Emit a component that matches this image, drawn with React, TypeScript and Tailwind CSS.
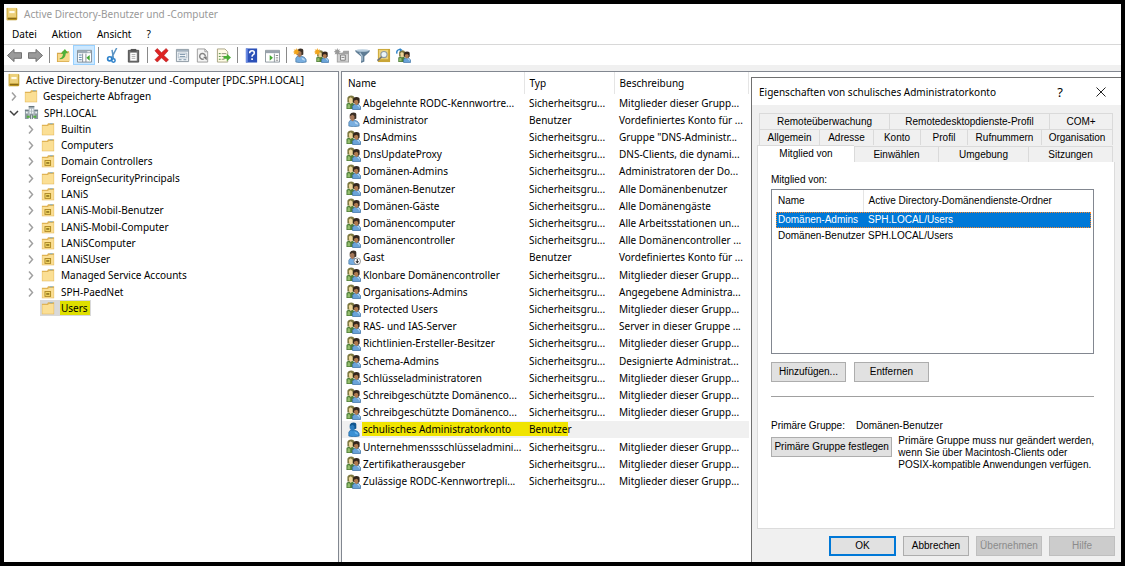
import { ReactNode, useState } from "react"
import clsx from "clsx"

type IconProps = { className?: string }

function Svg({ className = "size-[15px]", children }: IconProps & { children: ReactNode }) {
  return (
    <svg viewBox="0 0 16 16" aria-hidden="true" className={clsx("shrink-0", className)}>
      {children}
    </svg>
  )
}

function BookIcon({ className }: IconProps) {
  return (
    <Svg className={className}>
      <path d="M2 1h11l1 1v12l-1 1H2z" fill="#b8921f" />
      <path d="M3 1h10v11H3z" fill="#ecd07a" />
      <path d="M2 1h1.500v14H2z" fill="#d9b850" />
      <path d="M5 4.500h6V7H5z" fill="#fffbe8" />
      <path d="M3 12.500h10v1H3z" fill="#7d6015" />
    </Svg>
  )
}

function FolderIcon({ unit = false }: { unit?: boolean }) {
  return (
    <Svg className="size-[14px]">
      <path d="M1 3h6l1-1.500h7V15H1z" fill="#e0b354" />
      <path d="M1.500 4.500H8L9 3.500h5.500v11h-13z" fill="#fbdf94" />
      <path d="M10 1.500h3.500v1H10z" fill="#7db4dd" />
      {unit && (
        <>
          <path d="M4 7h7.500v6.500H4z" fill="#a8821c" />
          <path d="M5 8h5.500v4.500H5z" fill="#f3d766" />
          <path d="M6 9.500h3.500V11H6z" fill="#75590d" />
        </>
      )}
    </Svg>
  )
}

function DomainIcon() {
  return (
    <Svg>
      <path d="M5 1h6v13H5z" fill="#aeb9bf" />
      <path d="M1 5h4v10H1zM11 5h4v10h-4z" fill="#8b999f" />
      <path d="M5 1h6v1.500H5zM1 5h4v1H1zM11 5h4v1h-4z" fill="#66757c" />
      <path
        d="M6 4h1.500v2H6zM8.500 4H10v2H8.500zM6 7h1.500v2H6zM8.500 7H10v2H8.500zM2 7h2v2H2zM12 7h2v2h-2z"
        fill="#eff4f6"
      />
      <path d="M3 11.500h3v2H3zM10 11.500h3v2h-3z" fill="#54b23e" />
      <path d="M6.500 10h3v5h-3z" fill="#707d83" />
      <path d="M7.500 11h1v4h-1z" fill="#d8e0e3" />
    </Svg>
  )
}

function GroupShape() {
  return (
    <>
      <path d="M.5 15V9.500Q2 8 5 8t4 2v5z" fill="#4f7e39" />
      <path d="M1.500 13l.5-3.500 2.500 1V14h-3z" fill="#93bd6d" />
      <path d="M1.500 8V3q1-2.500 4-2.500T9 3v5z" fill="#7d7840" />
      <path d="M3 4l2-1.500L7 4v4L5 9.500 3.500 8z" fill="#edd59a" />
      <path d="M7 15.500V12q1-2.500 4-2.500t4.500 3v3z" fill="#6aa3d8" stroke="#3c71a5" strokeWidth=".8" />
      <path d="M11 10l3 1 1 3-2-2z" fill="#b9dcf5" />
      <path d="M7.500 8V5q0-3 3.700-3T14.500 5v3l-2 2z" fill="#33261c" />
      <path d="M8.500 6l3-1 1.500 1.500V9l-2 2L9 9z" fill="#b27c50" />
    </>
  )
}

function UserShape({ selected = false }: { selected?: boolean }) {
  return (
    <>
      <path
        d="M3 15V11q1-2.500 3-2.500h2q5 .5 6 4V15q-6 1.500-11 0z"
        fill={selected ? "#3c91d4" : "#78aee0"}
        stroke={selected ? "#155c98" : "#41739f"}
        strokeWidth=".7"
      />
      <path d="M9 10l3 1.500 1 2-3-1z" fill={selected ? "#67b5ed" : "#bddaf3"} />
      <path d="M4 7V3q1-2.500 4-2.500T11 3v4l-2 1z" fill={selected ? "#11568f" : "#3c3026"} />
      <path d="M4 4.500L7 3l2 1.500v3L7.500 10 5 8.500z" fill={selected ? "#2d7dbd" : "#a5785a"} />
    </>
  )
}

function GroupIcon() {
  return (
    <Svg>
      <GroupShape />
    </Svg>
  )
}

function UserIcon({ selected, disabled }: { selected?: boolean; disabled?: boolean }) {
  return (
    <Svg>
      <UserShape selected={selected} />
      {disabled && (
        <>
          <circle cx="12" cy="12" r="3.500" fill="#fff" stroke="#777" strokeWidth=".8" />
          <path d="M11.500 9.500h1V12H14l-2 2.500-2-2.500h1.500z" fill="#222" />
        </>
      )}
    </Svg>
  )
}

const sparkle = (
  <path
    d="M3.500 0l.8 2.200L6.500 1.200 5.400 3.300l2.100.9-2.200.8.900 2-2-1L3.500 8l-.8-2-2 1 .9-2L0 4.200l1.800-.9L.7 1.200l2 1z"
    fill="#f2a51d"
  />
)

const toolbarIcons: Record<string, ReactNode> = {
  Zurück: (
    <path d="M.5 8l7-6.500V5h8v6h-8v3.500z" fill="#9a9a9a" stroke="#6b6b6b" strokeWidth="1" />
  ),
  Vorwärts: (
    <path d="M15.500 8l-7-6.500V5h-8v6h8v3.500z" fill="#9a9a9a" stroke="#6b6b6b" strokeWidth="1" />
  ),
  "Eine Ebene höher": (
    <>
      <path d="M1 5h5l1-1.500h7V15H1z" fill="#d7a94b" />
      <path d="M2 6.500h6l1-1.500h5.500v9H2z" fill="#f8d98c" />
      <path d="M4 11q3-.5 3.500-5H5L9.500 1 13 5.500h-2.500Q10 12 4 12z" fill="#4eb13a" />
    </>
  ),
  "Konsolenstruktur anzeigen": (
    <>
      <path d="M.5 2.500h15V15H.5z" fill="#fff" stroke="#808b94" />
      <path d="M1 3h14v2.500H1z" fill="#9dabb6" />
      <path d="M11 3.500h3v1h-3z" fill="#fff" />
      <path d="M6 6v9M9.500 6v9" stroke="#808b94" />
      <path d="M2 7.500h3M2 10h3M2 12.500h3" stroke="#4c7da8" />
      <path d="M13.500 7.500v6L10 10.500z" fill="#44a832" />
    </>
  ),
  Ausschneiden: (
    <>
      <path d="M12.500 0L7 10.500M7.500 2l1.500 9" stroke="#5b94c4" strokeWidth="1.600" fill="none" />
      <circle cx="5" cy="11.500" r="2.200" fill="none" stroke="#2b80ca" strokeWidth="1.800" />
      <circle cx="9" cy="13.300" r="1.800" fill="none" stroke="#2b80ca" strokeWidth="1.600" />
    </>
  ),
  Einfügen: (
    <>
      <path d="M2.500 2.500h11v12.500h-11z" fill="#737373" stroke="#4c4c4c" />
      <path d="M4.500 5h7v8.500h-7z" fill="#fff" />
      <path d="M5 1h6v3H5z" fill="#555" />
      <path d="M6 7h4M6 9h4M6 11h4" stroke="#ababab" />
    </>
  ),
  Löschen: (
    <path
      d="M1 3l2.500-2.500L8 5l5-4.500L15 3l-4.500 5 5 4.500L13 15 8 10.500 3.500 15 1 12.500 5.500 8z"
      fill="#df2323"
      stroke="#a91717"
      strokeWidth=".6"
    />
  ),
  Eigenschaften: (
    <>
      <path d="M1.500 1.500h13v13h-13z" fill="#edf1f4" stroke="#8995a0" />
      <path d="M2 2h12v2H2z" fill="#a3b2bf" />
      <path d="M3.500 5.500h9v5h-9z" fill="#fff" stroke="#8fa4b5" strokeWidth=".7" />
      <path d="M5 7h6M5 9h6M4 12.500h3M9 12.500h3" stroke="#7791a7" />
    </>
  ),
  Aktualisieren: (
    <>
      <path d="M2.500 1h8l3 3v11h-11z" fill="#f4f4f4" stroke="#9c9c9c" />
      <path d="M10.500 1v3h3" fill="none" stroke="#9c9c9c" />
      <path d="M11 9a3 3 0 1 0-1.500 2.500" fill="none" stroke="#858585" strokeWidth="1.600" />
      <path d="M8.500 9.500l4-.5v4z" fill="#777" />
    </>
  ),
  "Liste exportieren": (
    <>
      <path d="M1.500 1h8l3 3v11h-11z" fill="#fffbe6" stroke="#a8a283" />
      <path d="M3 6h2M3 9h2M3 12h2" stroke="#4c8a42" />
      <path d="M6 6h5M6 9h3M6 12h3" stroke="#8e8b78" />
      <path d="M8 8.500h3.500V6l4.500 4-4.500 4v-2.500H8z" fill="#49ad35" />
    </>
  ),
  Hilfe: (
    <>
      <path d="M2 .5h12v15H2z" fill="#2b50b8" />
      <path d="M2 .5h2v15H2z" fill="#6b8be3" />
      <path
        d="M6 5.500q0-2.500 2.600-2.500Q11 3 11 5.200q0 1.300-1.500 2.200-.9.600-.9 2"
        fill="none"
        stroke="#fff"
        strokeWidth="1.600"
      />
      <path d="M7.700 11h1.800v1.800H7.700z" fill="#fff" />
    </>
  ),
  "Aktionsbereich anzeigen": (
    <>
      <path d="M.5 2.500h15V15H.5z" fill="#fff" stroke="#8b949c" />
      <path d="M1 3h14v2.500H1z" fill="#9aa4ad" />
      <path d="M10 6v9" stroke="#8b949c" />
      <path d="M11.500 8H14M11.500 10.500H14M11.500 13H14" stroke="#858585" />
      <path d="M5 7.500v6l3.500-3z" fill="#44a832" />
    </>
  ),
  "Neuer Benutzer": (
    <>
      <UserShape />
      {sparkle}
    </>
  ),
  "Neue Gruppe": (
    <>
      <g transform="translate(2 2) scale(.87)">
        <GroupShape />
      </g>
      {sparkle}
    </>
  ),
  "Neue Organisationseinheit": (
    <>
      <path d="M3 5h6l1-2h6v12.500H3z" fill="#a3a3a3" />
      <path d="M4 6.500h11v8H4z" fill="#d0d0d0" />
      <path d="M7 7.500h5v5.500H7z" fill="#f4f4f4" stroke="#777" />
      <path d="M8 10h3" stroke="#777" />
      <path
        d="M3.500 0l.8 2 2-.8-.9 2 2 .8-2 .8.9 2-2-.8-.8 2-.8-2-2 .8.9-2-2-.8 2-.8-.9-2 2 .8z"
        fill="#999"
      />
    </>
  ),
  Filter: (
    <>
      <path d="M.5 2h15v2L10 9v5.500L6.500 16V9L.5 4z" fill="#5f7d95" />
      <ellipse cx="8" cy="2.700" rx="7" ry="1.400" fill="#b8cddd" />
      <path d="M5 5l2.500 3.500v5" fill="none" stroke="#b8cddd" strokeWidth="1.300" />
    </>
  ),
  Suchen: (
    <>
      <path d="M2 1h13v14H2z" fill="#c9a536" />
      <path d="M3 2h10v10H3z" fill="#ecd279" />
      <circle cx="8.500" cy="7" r="3.300" fill="#e9f4fa" stroke="#8e9a9f" strokeWidth="1.200" />
      <path d="M6 9.500L1.500 13.500" stroke="#6f7477" strokeWidth="1.700" />
    </>
  ),
  "Zu Gruppe hinzufügen": (
    <>
      <g transform="translate(2 2) scale(.87)">
        <GroupShape />
      </g>
      <path d="M1 6Q0 2 4.500 1.500" fill="none" stroke="#2e83c9" strokeWidth="1.500" />
      <path d="M4 0l3 2-3 2z" fill="#2e83c9" />
    </>
  ),
}

const toolbarGroups = [
  { width: "w-[42px]", items: ["Zurück", "Vorwärts"] },
  { width: "w-[42px]", items: ["Eine Ebene höher", "Konsolenstruktur anzeigen"] },
  { width: "w-[42px]", items: ["Ausschneiden", "Einfügen"] },
  { width: "w-[83px]", items: ["Löschen", "Eigenschaften", "Aktualisieren", "Liste exportieren"] },
  { width: "w-[42px]", items: ["Hilfe", "Aktionsbereich anzeigen"] },
  {
    width: "w-[124px]",
    items: [
      "Neuer Benutzer",
      "Neue Gruppe",
      "Neue Organisationseinheit",
      "Filter",
      "Suchen",
      "Zu Gruppe hinzufügen",
    ],
  },
]

const containers = [
  { name: "Builtin" },
  { name: "Computers" },
  { name: "Domain Controllers", unit: true },
  { name: "ForeignSecurityPrincipals" },
  { name: "LANiS", unit: true },
  { name: "LANiS-Mobil-Benutzer", unit: true },
  { name: "LANiS-Mobil-Computer", unit: true },
  { name: "LANiSComputer", unit: true },
  { name: "LANiSUser", unit: true },
  { name: "Managed Service Accounts" },
  { name: "SPH-PaedNet", unit: true },
]

const GROUP = "Sicherheitsgru..."
const USER = "Benutzer"
const MEMBERS = "Mitglieder dieser Grupp..."

const entries: [name: string, type: string, description: string][] = [
  ["Abgelehnte RODC-Kennwortre...", GROUP, MEMBERS],
  ["Administrator", USER, "Vordefiniertes Konto für ..."],
  ["DnsAdmins", GROUP, 'Gruppe "DNS-Administr...'],
  ["DnsUpdateProxy", GROUP, "DNS-Clients, die dynami..."],
  ["Domänen-Admins", GROUP, "Administratoren der Do..."],
  ["Domänen-Benutzer", GROUP, "Alle Domänenbenutzer"],
  ["Domänen-Gäste", GROUP, "Alle Domänengäste"],
  ["Domänencomputer", GROUP, "Alle Arbeitsstationen un..."],
  ["Domänencontroller", GROUP, "Alle Domänencontroller ..."],
  ["Gast", USER, "Vordefiniertes Konto für ..."],
  ["Klonbare Domänencontroller", GROUP, MEMBERS],
  ["Organisations-Admins", GROUP, "Angegebene Administra..."],
  ["Protected Users", GROUP, MEMBERS],
  ["RAS- und IAS-Server", GROUP, "Server in dieser Gruppe ..."],
  ["Richtlinien-Ersteller-Besitzer", GROUP, MEMBERS],
  ["Schema-Admins", GROUP, "Designierte Administrat..."],
  ["Schlüsseladministratoren", GROUP, MEMBERS],
  ["Schreibgeschützte Domänenco...", GROUP, MEMBERS],
  ["Schreibgeschützte Domänenco...", GROUP, MEMBERS],
  ["schulisches Administratorkonto", USER, ""],
  ["Unternehmenssschlüsseladmini...", GROUP, MEMBERS],
  ["Zertifikatherausgeber", GROUP, MEMBERS],
  ["Zulässige RODC-Kennwortrepli...", GROUP, MEMBERS],
]

const SELECTED = "schulisches Administratorkonto"

function Chevron({ open = false }: { open?: boolean }) {
  return (
    <svg viewBox="0 0 10 10" aria-hidden="true" className="size-[10px] shrink-0">
      <path
        d={open ? "M1 3l4 4 4-4" : "M3 1.500L6.500 5.500 3 9.500"}
        fill="none"
        stroke={open ? "#404040" : "#a0a0a0"}
        strokeWidth="1.500"
      />
    </svg>
  )
}

function Toolbar() {
  return (
    <div role="toolbar" className="flex h-[21px] items-center border-t border-[#d8d8d8]">
      {toolbarGroups.map((group, index) => (
        <div key={group.items[0]} className="flex items-center">
          {index > 0 && <span className="mx-[3px] h-4 w-px bg-[#8a8a8a]" />}
          <div className={clsx("flex", group.width)}>
            {group.items.map((label) => (
              <button
                key={label}
                type="button"
                title={label}
                aria-label={label}
                className={clsx(
                  "flex h-5 flex-1 items-center justify-center",
                  label === "Konsolenstruktur anzeigen" && "border border-[#99d1ff] bg-[#cce8ff]",
                )}
              >
                <Svg>{toolbarIcons[label]}</Svg>
              </button>
            ))}
          </div>
        </div>
      ))}
    </div>
  )
}

function ConsoleTree() {
  return (
    <nav className="w-[335px] shrink-0 border-t border-r border-[#828790] bg-white">
      <ul className="grid h-[244px] auto-rows-fr">
        <li className="flex items-center gap-[5px] pl-[3px]">
          <BookIcon className="size-[14px]" />
          Active Directory-Benutzer und -Computer [PDC.SPH.LOCAL]
        </li>
        <li className="flex items-center gap-[5px] pl-[5px]">
          <Chevron />
          <FolderIcon />
          <span>Gespeicherte Abfragen</span>
        </li>
        <li className="flex items-center gap-[5px] pl-[5px]">
          <Chevron open />
          <DomainIcon />
          <span>SPH.LOCAL</span>
        </li>
        {containers.map(({ name, unit }) => (
          <li key={name} className="flex items-center gap-[5px] pl-[22px]">
            <Chevron />
            <FolderIcon unit={unit} />
            <span className="pl-px">{name}</span>
          </li>
        ))}
        <li className="flex pl-[36px]">
          <div className="flex items-center gap-[5px] bg-[#d9d9d9] pr-px pl-px">
            <FolderIcon />
            <mark className="bg-[#dfdf00] pr-[2px] pl-px text-black">Users</mark>
          </div>
        </li>
      </ul>
    </nav>
  )
}

function EntryIcon({ name, type }: { name: string; type: string }) {
  if (type === GROUP) return <GroupIcon />
  return <UserIcon selected={name === SELECTED} disabled={name === "Gast"} />
}

function EntryList() {
  return (
    <section className="min-w-0 flex-1 overflow-hidden border-t border-l border-[#828790] bg-white">
      <table className="h-[418px] w-[407px] table-fixed border-collapse text-left whitespace-nowrap">
        <thead>
          <tr className="h-[22px]">
            <th className="w-[182px] border-r border-[#e5e5e5] pl-[6px] font-normal">Name</th>
            <th className="w-[90px] border-r border-[#e5e5e5] pl-[5px] font-normal">Typ</th>
            <th className="border-r border-[#e5e5e5] pl-[5px] font-normal">Beschreibung</th>
          </tr>
        </thead>
        <tbody>
          {entries.map(([name, type, description], index) => {
            const selected = name === SELECTED
            return (
              <tr key={index} className={clsx(selected && "bg-[#f0f0f0]")}>
                <td className="p-0 pl-1">
                  <div className="flex items-center gap-px">
                    <EntryIcon name={name} type={type} />
                    <span className={clsx("flex-1 pl-px", selected && "bg-[#f0e400]")}>{name}</span>
                  </div>
                </td>
                <td className="p-0">
                  <span className={clsx("block w-[44px] pl-[5px]", selected && "bg-[#f0e400]")}>
                    {type}
                  </span>
                </td>
                <td className="p-0 pl-[5px]">{description}</td>
              </tr>
            )
          })}
        </tbody>
      </table>
    </section>
  )
}

type DialogButtonProps = React.ButtonHTMLAttributes<HTMLButtonElement> & { primary?: boolean }

function DialogButton({ className, primary = false, children, ...props }: DialogButtonProps) {
  return (
    <button
      type="button"
      className={clsx(
        "h-5 bg-[#e1e1e1] text-center whitespace-nowrap disabled:border-[#bfbfbf] disabled:bg-[#cccccc] disabled:text-[#8b8b8b]",
        primary ? "border-2 border-[#0078d7]" : "border border-[#adadad]",
        className,
      )}
      {...props}
    >
      {children}
    </button>
  )
}

const tabRows = [
  [
    ["Remoteüberwachung", "w-[130px]"],
    ["Remotedesktopdienste-Profil", "w-[160px]"],
    ["COM+", "flex-1"],
  ],
  [
    ["Allgemein", "w-[60px]"],
    ["Adresse", "w-[54px]"],
    ["Konto", "w-[47px]"],
    ["Profil", "w-[47px]"],
    ["Rufnummern", "w-[74px]"],
    ["Organisation", "flex-1"],
  ],
]

function PropertiesDialog({ onClose }: { onClose: () => void }) {
  return (
    <div
      role="dialog"
      aria-labelledby="properties-title"
      className="absolute top-[73px] right-0 bottom-0 flex w-[370px] flex-col border-t border-l border-[#707070] bg-[#f0f0f0] font-['Liberation_Sans',sans-serif]"
    >
      <header className="flex h-[27px] shrink-0 items-center bg-white pl-[7px] font-['Noto_Sans',sans-serif]">
        <h2 id="properties-title" className="flex-1">
          Eigenschaften von schulisches Administratorkonto
        </h2>
        <button type="button" aria-label="Hilfe" className="w-[40px] text-[13px]">
          ?
        </button>
        <button type="button" aria-label="Schließen" onClick={onClose} className="flex w-[41px] justify-center">
          <svg viewBox="0 0 10 10" className="size-[10px]">
            <path d="M.5.5l9 9M9.500.5l-9 9" stroke="#222" />
          </svg>
        </button>
      </header>

      <div className="flex min-h-0 flex-1 flex-col pt-2 pr-[6px] pl-[5px]">
        <div role="tablist" className="shrink-0">
          {tabRows.map((row, index) => (
            <div key={index} className="mr-[2px] ml-[2px] flex h-4 border-l border-[#dadada]">
              {row.map(([label, width]) => (
                <button
                  key={label}
                  type="button"
                  role="tab"
                  className={clsx("border-t border-r border-[#dadada]", width)}
                >
                  {label}
                </button>
              ))}
            </div>
          ))}
          <div className="mr-[2px] flex h-[17px] items-end">
            <button
              type="button"
              role="tab"
              aria-selected="true"
              className="h-full w-[97px] border-t border-l border-[#dadada] bg-white"
            >
              Mitglied von
            </button>
            <button type="button" role="tab" className="h-4 w-[85px] border-t border-r border-l border-[#dadada]">
              Einwählen
            </button>
            <button type="button" role="tab" className="h-4 w-[90px] border-t border-r border-[#dadada]">
              Umgebung
            </button>
            <button type="button" role="tab" className="h-4 flex-1 border-t border-r border-[#dadada]">
              Sitzungen
            </button>
          </div>
        </div>

        <div
          role="tabpanel"
          className="flex-1 border-r border-b border-l border-[#dcdcdc] bg-white pt-[11px] pr-[20px] pl-[13px]"
        >
          <p id="member-label" className="leading-[13px]">
            Mitglied von:
          </p>
          <div className="mt-[3px] h-[165px] border border-[#828790] pr-[2px] pl-1">
            <table aria-labelledby="member-label" className="w-full table-fixed border-collapse text-left">
              <thead>
                <tr className="h-[22px]">
                  <th className="w-[87px] border-r border-[#e5e5e5] p-0 pl-[2px] font-normal">Name</th>
                  <th className="p-0 pl-[5px] font-normal">Active Directory-Domänendienste-Ordner</th>
                </tr>
              </thead>
              <tbody>
                <tr className="h-4 bg-[#0078d7] text-white outline-1 -outline-offset-1 outline-[#ff8728] outline-dotted">
                  <td className="p-0 pl-[2px] whitespace-nowrap">Domänen-Admins</td>
                  <td className="p-0 pl-[5px]">SPH.LOCAL/Users</td>
                </tr>
                <tr className="h-4">
                  <td className="p-0 pl-[2px] whitespace-nowrap">Domänen-Benutzer</td>
                  <td className="p-0 pl-[5px]">SPH.LOCAL/Users</td>
                </tr>
              </tbody>
            </table>
          </div>
          <div className="mt-2 flex gap-2">
            <DialogButton className="w-[75px]">Hinzufügen...</DialogButton>
            <DialogButton className="w-[75px]">Entfernen</DialogButton>
          </div>
          <hr className="mt-[14px] border-[#a0a0a0]" />
          <div className="mt-[22px] flex leading-[14px]">
            <span className="w-[85px]">Primäre Gruppe:</span>
            <span>Domänen-Benutzer</span>
          </div>
          <div className="mt-[2px] flex items-start gap-[6px]">
            <DialogButton className="mt-[2px] w-[122px]">Primäre Gruppe festlegen</DialogButton>
            <p className="flex-1 leading-3 whitespace-nowrap">
              Primäre Gruppe muss nur geändert werden,
              <br />
              wenn Sie über Macintosh-Clients oder
              <br />
              POSIX-kompatible Anwendungen verfügen.
            </p>
          </div>
        </div>

        <footer className="flex shrink-0 justify-end gap-[7px] pt-[7px] pb-[6px]">
          <DialogButton primary onClick={onClose} className="w-[67px]">
            OK
          </DialogButton>
          <DialogButton onClick={onClose} className="w-[66px]">
            Abbrechen
          </DialogButton>
          <DialogButton disabled className="w-[66px]">
            Übernehmen
          </DialogButton>
          <DialogButton disabled className="w-[66px]">
            Hilfe
          </DialogButton>
        </footer>
      </div>
    </div>
  )
}

export default function App() {
  const [isDialogOpen, setIsDialogOpen] = useState(true)

  return (
    <div className="flex min-h-screen flex-col border-4 border-black bg-white font-['Noto_Sans',sans-serif] text-[10px] leading-[14px] text-black">
      <div className="relative flex flex-1 flex-col">
        <header className="flex h-5 items-center gap-[5px] pl-px text-[#999999]">
          <BookIcon className="size-[14px]" />
          <h1>Active Directory-Benutzer und -Computer</h1>
        </header>
        <div role="menubar" className="flex h-5 items-center gap-[15px] pl-2">
          {["Datei", "Aktion", "Ansicht", "?"].map((label) => (
            <button key={label} type="button" role="menuitem">
              {label}
            </button>
          ))}
        </div>
        <Toolbar />
        <main className="flex flex-1 gap-[2px] bg-[#f0f0f0] pt-[6px]">
          <ConsoleTree />
          <EntryList />
        </main>
        {isDialogOpen && <PropertiesDialog onClose={() => setIsDialogOpen(false)} />}
      </div>
    </div>
  )
}
